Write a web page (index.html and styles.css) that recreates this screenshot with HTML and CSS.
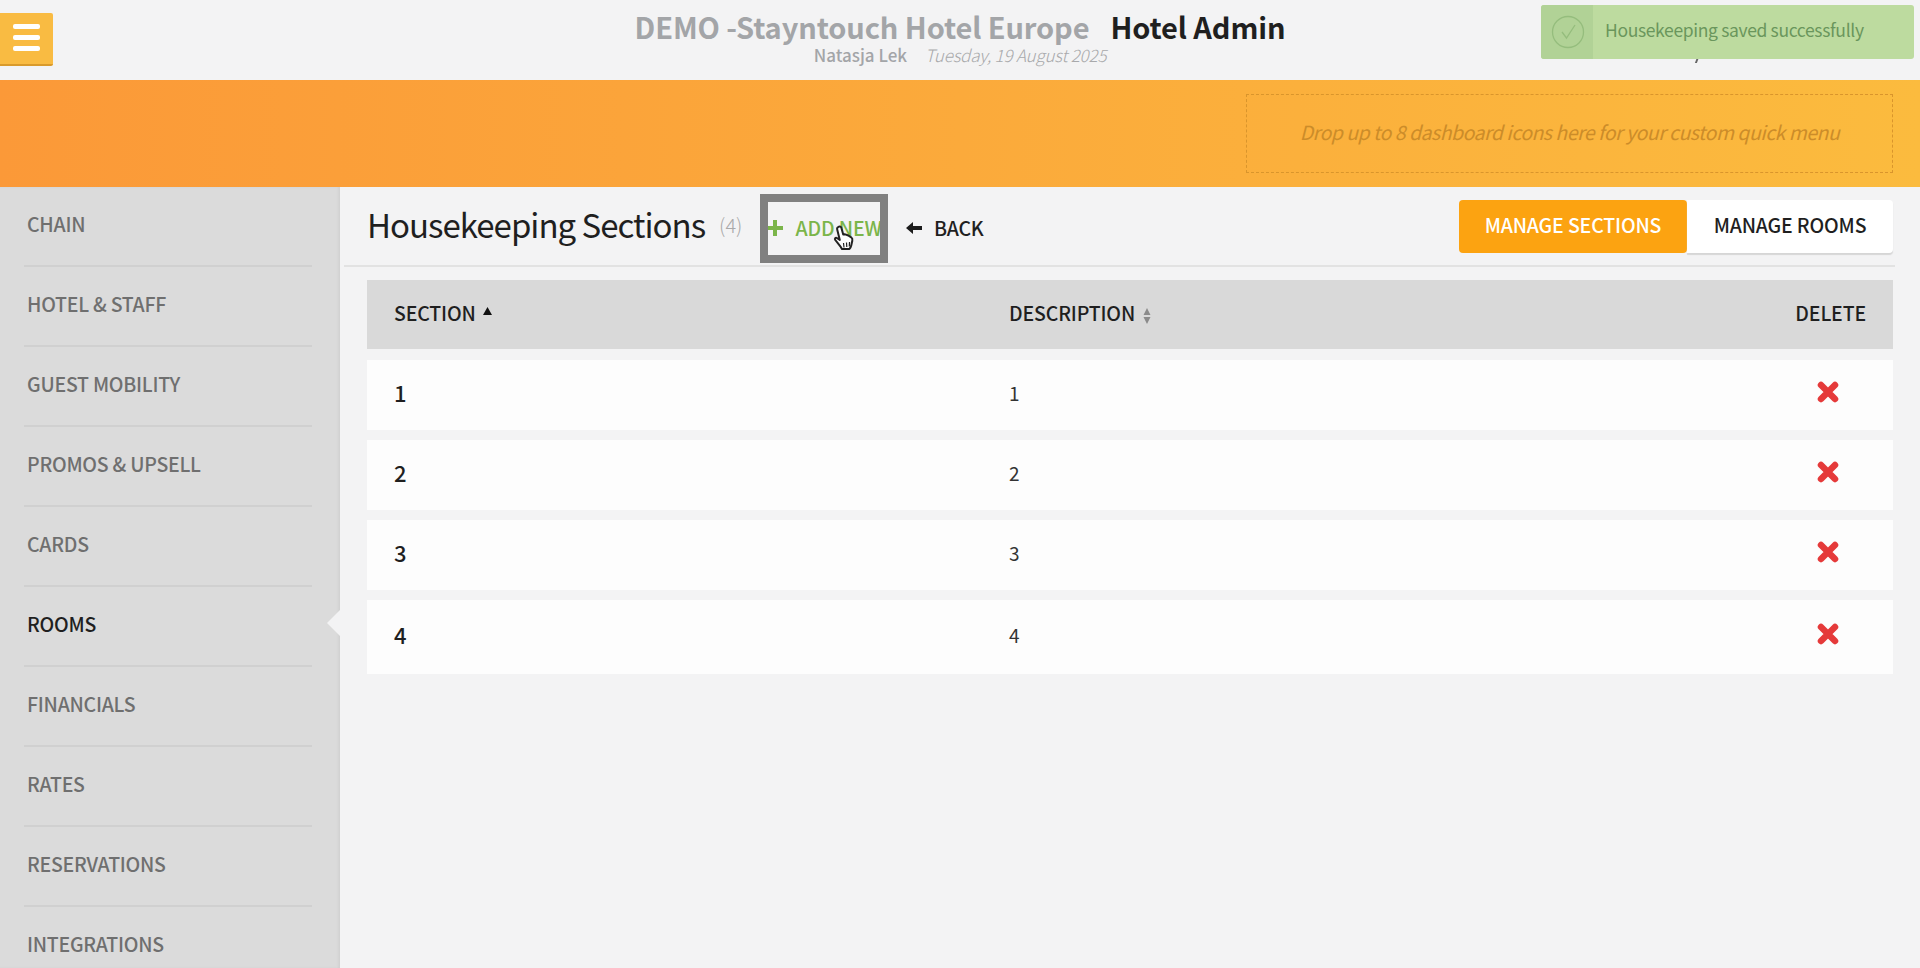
FILE: index.html
```html
<!DOCTYPE html>
<html lang="en">
	<head>
		<meta charset="UTF-8">
		<title>Housekeeping Sections</title>
		<link rel="stylesheet" href="styles.css">
	</head>
	<body>
		<header class="topbar">
			<button class="menubtn" aria-label="Menu"><span></span><span></span><span></span></button>
			<div class="topbar-title">
				<h1><span class="hotelname">DEMO -Stayntouch Hotel Europe</span><span class="appname">Hotel Admin</span></h1>
				<p><span class="username">Natasja Lek</span><em>Tuesday, 19 August 2025</em></p>
			</div>
			<span class="toast-tail"></span>
			<div class="toast">
				<div class="toast-icon">
					<svg width="34" height="34" viewBox="0 0 34 34" fill="none" stroke="#95bd7d" stroke-width="1.3"><circle cx="17" cy="17" r="15.5"/><path d="M11 17l4.500 6L24 10"/></svg>
				</div>
				<div class="toast-text">Housekeeping saved successfully</div>
			</div>
		</header>
		<div class="band">
			<div class="dropzone">Drop up to 8 dashboard icons here for your custom quick menu</div>
		</div>
		<div class="layout">
			<nav class="sidebar">
				<a href="#">CHAIN</a>
				<a href="#">HOTEL &amp; STAFF</a>
				<a href="#">GUEST MOBILITY</a>
				<a href="#">PROMOS &amp; UPSELL</a>
				<a href="#">CARDS</a>
				<a href="#" class="active">ROOMS</a>
				<a href="#">FINANCIALS</a>
				<a href="#">RATES</a>
				<a href="#">RESERVATIONS</a>
				<a href="#">INTEGRATIONS</a>
			</nav>
			<main class="content">
				<div class="pagehead">
					<h2>Housekeeping Sections</h2>
					<span class="count">(4)</span>
					<a href="#" class="addnew"><svg class="plus" width="16" height="16" viewBox="0 0 16 16" fill="#7bb54a"><path d="M6 0h4v6h6v4h-6v6H6v-6H0V6h6z"/></svg>ADD NEW</a>
					<a href="#" class="back"><svg width="16" height="12" viewBox="0 0 16 12" fill="#1c1c1c"><path d="M0 6L7 0v4h9v4H7v4z"/></svg>BACK</a>
					<div class="tabs">
						<a href="#" class="tab tab-on">MANAGE SECTIONS</a>
						<a href="#" class="tab">MANAGE ROOMS</a>
					</div>
					<div class="highlight"></div>
					<svg class="cursor" width="22" height="27" viewBox="0 0 22 27" fill="#fff" stroke="#222" stroke-width="2" stroke-linejoin="round"><path d="M5.500 1.800c1.300-.8 2.700 0 3 1.400l1.700 6.300 1.300-.3 1.500.4 1.600.6 1.700.9 1.900 1.200c1.200.9 1.400 2.100 1.100 3.500l-1 4.500c-.3 1.400-.9 2.600-1.800 3.600H9c-1-1.800-2.600-3.800-4.400-6L2.300 15c-1-1.200.3-2.800 1.600-2l2.900 2-2.600-10.500c-.3-1.200.2-2.200 1.300-2.700z"/><path d="M10.500 18l.5 4.500M13.500 17.500l.3 4.500M16.500 17l-.2 4.500" fill="none" stroke-width="1.200"/></svg>
				</div>
				<div class="tablewrap">
					<div class="row row-head">
						<div class="col-section">SECTION<svg class="sort" width="9" height="8" viewBox="0 0 9 8"><path d="M4.500 0L9 8H0z" fill="#111"/></svg></div>
						<div class="col-desc">DESCRIPTION<svg class="sort sort-off" width="8" height="16" viewBox="0 0 8 16"><path d="M4 0l3.500 7H.5zM4 16L.5 9h7z" fill="#8a8a8a"/></svg></div>
						<div class="col-delete">DELETE</div>
					</div>
					<div class="row">
						<div class="col-section">1</div>
						<div class="col-desc">1</div>
						<div class="col-delete"><svg class="cross" width="22" height="22" viewBox="0 0 22 22"><path d="M4 4l14 14M18 4L4 18"/></svg></div>
					</div>
					<div class="row">
						<div class="col-section">2</div>
						<div class="col-desc">2</div>
						<div class="col-delete"><svg class="cross" width="22" height="22" viewBox="0 0 22 22"><path d="M4 4l14 14M18 4L4 18"/></svg></div>
					</div>
					<div class="row">
						<div class="col-section">3</div>
						<div class="col-desc">3</div>
						<div class="col-delete"><svg class="cross" width="22" height="22" viewBox="0 0 22 22"><path d="M4 4l14 14M18 4L4 18"/></svg></div>
					</div>
					<div class="row row-last">
						<div class="col-section">4</div>
						<div class="col-desc">4</div>
						<div class="col-delete"><svg class="cross" width="22" height="22" viewBox="0 0 22 22"><path d="M4 4l14 14M18 4L4 18"/></svg></div>
					</div>
				</div>
			</main>
		</div>
	</body>
</html>
```

FILE: styles.css
```css
:root{
	--page-bg:#f3f3f4;
	--side-bg:#dbdbdb;
	--line:#d0d0d0;
	--dark:#1f1f1f;
	--grey:#6f6f6f;
}
*{
	box-sizing:border-box;
}
html,body{
	height:968px;
	overflow:hidden;
}
body{
	margin:0;
	background-color:var(--page-bg);
	font-family:"Noto Sans CJK SC","Open Sans",sans-serif;
	color:var(--dark);
}
a{
	color:inherit;
	text-decoration:none;
}

/* top bar */
.topbar{
	position:relative;
	height:80px;
	display:flex;
	justify-content:center;
}
.menubtn{
	position:absolute;
	left:0;
	top:13px;
	width:53px;
	height:53px;
	padding:0 0 2px 0;
	border:none;
	border-bottom:2px solid #d99a2b;
	border-radius:0 2px 2px 0;
	background-color:#f9bb42;
	display:flex;
	flex-direction:column;
	align-items:center;
	justify-content:center;
	gap:5.500px;
}
.menubtn span{
	width:27px;
	height:5.500px;
	border-radius:2px;
	background-color:#fff;
}
.topbar-title{
	padding-top:9px;
	text-align:center;
}
.topbar-title h1{
	margin:0;
	font-size:29px;
	line-height:34px;
	font-weight:700;
	letter-spacing:-0.1px;
	display:flex;
	gap:21px;
}
.hotelname{
	color:#a3a5a8;
}
.topbar-title p{
	margin:2px 0 0 0;
	font-size:17px;
	line-height:20px;
	color:#a3a5a8;
	display:flex;
	justify-content:center;
	gap:18px;
}
.username{
	font-weight:500;
}
.topbar-title em{
	color:#a8a9ab;
	font-weight:300;
	letter-spacing:-0.2px;
}
.toast-tail{
	position:absolute;
	left:1696px;
	top:57px;
	width:2px;
	height:6px;
	background-color:#666;
	transform:skewX(-20deg);
}
.toast{
	position:absolute;
	left:1541px;
	top:5px;
	width:373px;
	height:54px;
	display:flex;
	border-radius:3px;
	overflow:hidden;
	background-color:#bddb9f;
}
.toast-icon{
	width:52px;
	background-color:#b1d296;
	display:flex;
	align-items:center;
	justify-content:center;
	padding-left:2px;
}
.toast-text{
	padding-left:12px;
	line-height:50px;
	font-size:17.500px;
	letter-spacing:-0.35px;
	color:#6a965c;
}

/* orange band */
.band{
	height:107px;
	background:linear-gradient(to right,#fb9938,#fbbb3e);
	display:flex;
	justify-content:flex-end;
	padding:14px 27px 14px 0;
}
.dropzone{
	width:647px;
	border:1px dashed #d9952c;
	text-align:center;
	font-size:19.500px;
	line-height:73px;
	font-style:italic;
	font-weight:400;
	letter-spacing:-0.5px;
	color:#cc8c29;
}

/* sidebar */
.layout{
	display:flex;
	height:781px;
}
.sidebar{
	position:relative;
	width:340px;
	flex-shrink:0;
	overflow:hidden;
	background-color:var(--side-bg);
	box-shadow:inset -2px 0 2px #d2d2d2;
}
.sidebar a{
	display:block;
	height:80px;
	margin:0 28px 0 24px;
	padding:19px 0 0 3px;
	border-bottom:2px solid var(--line);
	font-size:19.500px;
	line-height:36px;
	font-weight:500;
	letter-spacing:-0.25px;
	color:var(--grey);
}
.sidebar a.active{
	position:relative;
	color:var(--dark);
}
.sidebar a.active::after{
	content:"";
	position:absolute;
	right:-28px;
	top:23px;
	border-style:solid;
	border-width:13px 13px 13px 0;
	border-color:transparent var(--page-bg) transparent transparent;
}

/* main */
.content{
	flex:1;
	padding:0 27px 0 27px;
}
.pagehead{
	position:relative;
	height:80px;
	margin:0 -2px 0 -23px;
	padding-left:23px;
	border-bottom:2px solid #e2e2e2;
	display:flex;
	align-items:flex-start;
}
.pagehead h2{
	margin:14px 0 0 0;
	font-size:33px;
	line-height:46px;
	font-weight:400;
	letter-spacing:-1px;
}
.count{
	margin:25px 0 0 14px;
	font-size:20px;
	line-height:26px;
	color:#a9a9a9;
	font-weight:300;
}
.addnew{
	margin:26px 0 0 25px;
	font-size:19.500px;
	line-height:30px;
	font-weight:500;
	letter-spacing:-0.1px;
	color:#7bb54a;
	display:flex;
	align-items:center;
	gap:12px;
}
.back{
	margin:26px 0 0 24px;
	font-size:19.500px;
	line-height:30px;
	font-weight:500;
	letter-spacing:-0.2px;
	display:flex;
	align-items:center;
	gap:12px;
}
.tabs{
	margin:13px 2px 0 auto;
	display:flex;
}
.tab{
	width:206px;
	height:53px;
	border-radius:0 4px 4px 0;
	background-color:#fff;
	box-shadow:0 2px 1px #d6d6d6;
	text-align:center;
	font-size:19.500px;
	line-height:50px;
	font-weight:500;
	letter-spacing:-0.15px;
}
.tab-on{
	width:228px;
	border-radius:4px;
	background-color:#fca311;
	box-shadow:none;
	color:#fff;
}
.highlight{
	position:absolute;
	left:416px;
	top:7px;
	width:128px;
	height:69px;
	border:8px solid #808080;
}
.cursor{
	position:absolute;
	left:489px;
	top:38px;
}

/* table */
.tablewrap{
	margin-top:13px;
}
.row{
	display:flex;
	align-items:center;
	height:70px;
	margin-bottom:10px;
	padding:0 27px 5px 27px;
	background-color:#fdfdfd;
	font-size:22px;
	font-weight:500;
}
.row-head{
	height:69px;
	margin-bottom:11px;
	background-color:#d9d9d9;
	font-size:19.500px;
	letter-spacing:-0.15px;
}
.row-last{
	height:74px;
}
.col-section{
	width:615px;
	flex-shrink:0;
	padding-bottom:2px;
}
.row-head .col-section{
	padding-bottom:0;
}
.col-desc{
	flex:1;
}
.row .col-desc{
	font-size:19px;
	font-weight:400;
	color:#333;
}
.row-head .col-desc{
	font-size:19.500px;
	font-weight:500;
	color:var(--dark);
}
.col-delete{
	display:flex;
	justify-content:flex-end;
	padding-right:27px;
}
.row-head .col-delete{
	padding-right:0;
}
.sort{
	margin-left:7px;
	vertical-align:6px;
}
.sort-off{
	margin-left:8px;
	vertical-align:-3px;
}
.cross{
	fill:none;
	stroke:#e53a3a;
	stroke-width:6.500px;
	stroke-linecap:round;
	display:block;
	margin-top:-1px;
}
```
